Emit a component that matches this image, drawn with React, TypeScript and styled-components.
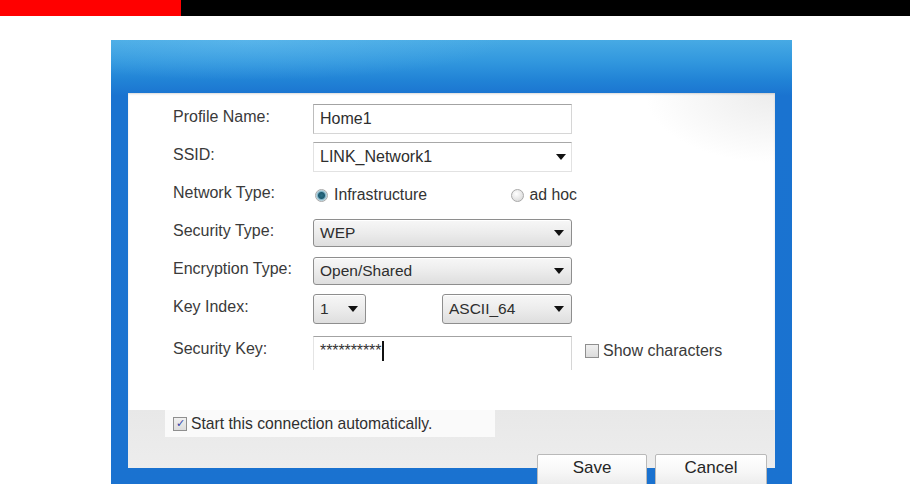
import * as React from 'react';
import styled, { createGlobalStyle, css } from 'styled-components';

const Global = createGlobalStyle`
  html, body {
    margin: 0;
    padding: 0;
    background: #fff;
    overflow: hidden;
  }
  body {
    font-family: "Liberation Sans", Arial, sans-serif;
    width: 913px;
    height: 484px;
  }
`;

const Page = styled.div`
  width: 913px;
  height: 484px;
  overflow: hidden;
`;

const TopBar = styled.div`
  display: flex;
  width: 910px;
  height: 16px;
  background: #000;
`;

const RedSegment = styled.div`
  width: 181px;
  background: #ff0000;
`;

const Dialog = styled.div`
  margin: 24px 0 0 111px;
  width: 681px;
  height: 460px;
  box-sizing: border-box;
  padding: 53px 17px 0 17px;
  background:
    radial-gradient(260px 40px at 20% 0, rgba(120, 200, 245, 0.35), rgba(255, 255, 255, 0)),
    linear-gradient(180deg, #47aae4 0px, #3197de 22px, #2183d6 40px, #1a73d0 56px, #1a72d0 100%);
`;

const Panel = styled.div`
  height: 375px;
  display: flex;
  flex-direction: column;
  background:
    radial-gradient(130px 70px at 100% 0, #ececec, rgba(255, 255, 255, 0)),
    #fff;
  box-shadow: inset 0 1px 2px rgba(0, 0, 0, 0.15);
`;

const Form = styled.div`
  display: grid;
  grid-template-columns: 140px 259px auto;
  grid-template-rows: repeat(6, 30px) 38px;
  row-gap: 8px;
  padding: 11px 0 0 45px;
  color: #3a3a3a;
  font-size: 16px;
`;

const Label = styled.div`
  align-self: center;
  margin-top: -5px;
`;

const fieldText = css`
  box-sizing: border-box;
  display: flex;
  align-items: center;
  padding: 0 6px;
  font-size: 15.5px;
  color: #2e2e2e;
`;

const TextField = styled.div<{ $open?: boolean }>`
  ${fieldText}
  width: 259px;
  font-size: 16px;
  background: #fff;
  border: 1px solid #d6d6d6;
  border-top-color: #a3a3a3;
  border-left-color: #bdbdbd;
  ${(p) => p.$open && css`
    border-bottom: none;
    border-left-color: #e4e4e4;
    height: 34px;
    align-self: end;
    align-items: flex-start;
    padding-top: 5px;
  `}
`;

const Arrow = styled.span`
  margin-left: auto;
  width: 0;
  height: 0;
  border-left: 5px solid transparent;
  border-right: 5px solid transparent;
  border-top: 6px solid #111;
`;

const Select = styled.div<{ $w?: number; $tall?: boolean }>`
  ${fieldText}
  width: ${(p) => (p.$w ? `${p.$w}px` : '100%')};
  height: ${(p) => (p.$tall ? 30 : 28)}px;
  align-self: center;
  border: 1px solid #8e8e8e;
  border-radius: 3px;
  background: linear-gradient(180deg, #f7f7f7 0%, #ececec 50%, #dedede 100%);
  box-shadow: inset 0 1px 0 #fff;
  padding-right: 7px;
`;

const PlainSelect = styled.div`
  ${fieldText}
  font-size: 16px;
  background: #fff;
  border: 1px solid #e2e2e2;
  border-top-color: #a8a8a8;
  padding-right: 5px;
`;

const Split = styled.div`
  display: flex;
  align-items: center;
  justify-content: space-between;
`;

const RadioGroup = styled.div`
  display: flex;
  align-items: center;
  justify-content: space-between;
  width: 264px;
  padding-left: 2px;
  box-sizing: border-box;
  font-size: 15.8px;
  color: #333;
`;

const RadioItem = styled.label`
  display: flex;
  align-items: center;
  gap: 6px;
`;

const Radio = styled.span<{ $on?: boolean }>`
  width: 11px;
  height: 11px;
  border-radius: 50%;
  border: 1px solid #a9a9a9;
  background: ${(p) =>
    p.$on
      ? 'radial-gradient(circle at 50% 50%, #2b6f86 0, #1d5a70 3px, #7fb3c6 4px, #e6eef2 6px)'
      : 'radial-gradient(circle at 40% 35%, #fff, #d2d2d2)'};
`;

const Box = styled.span`
  box-sizing: border-box;
  width: 14px;
  height: 14px;
  border: 1px solid #8f8f8f;
  background: linear-gradient(180deg, #f0f0f0, #dcdcdc);
  display: flex;
  align-items: center;
  justify-content: center;
  color: #3446a8;
  font-size: 11px;
  line-height: 1;
  flex: none;
`;

const CheckLabel = styled.label`
  display: flex;
  align-items: center;
  gap: 4px;
  font-size: 16px;
  color: #3a3a3a;
`;

const ShowChars = styled(CheckLabel)`
  margin-left: 13px;
  align-self: end;
  margin-bottom: 10px;
`;

const Masked = styled.span`
  font-size: 16px;
  letter-spacing: -0.1px;
  color: #333;
`;

const Caret = styled.span`
  display: inline-block;
  width: 2px;
  height: 20px;
  background: #111;
  margin-left: 1px;
  margin-top: -1px;
`;

const Footer = styled.div`
  margin-top: auto;
  height: 58px;
  background: linear-gradient(180deg, #e8e8e8, #ededed);
`;

const AutoRow = styled.div`
  margin-left: 37px;
  width: 330px;
  height: 27px;
  box-sizing: border-box;
  padding-left: 8px;
  display: flex;
  align-items: center;
  background: #fafafa;
`;

const AutoText = styled.span`
  color: #2f2f2f;
  font-size: 15.7px;
`;

const ButtonRow = styled.div`
  display: flex;
  justify-content: flex-end;
  gap: 8px;
  margin-top: -14px;
  padding-right: 8px;
`;

const Button = styled.button<{ $w: number }>`
  width: ${(p) => p.$w}px;
  height: 32px;
  border: 1px solid #b9b9b9;
  border-radius: 2px;
  background: linear-gradient(180deg, #ffffff 0%, #f6f6f6 60%, #ececec 100%);
  font-family: "Liberation Sans", Arial, sans-serif;
  font-size: 17px;
  color: #262626;
  padding: 0 0 4px;
`;

export default function App() {
  return (
    <Page>
      <Global />
      <TopBar>
        <RedSegment />
      </TopBar>
      <Dialog>
        <Panel>
          <Form>
            <Label>Profile Name:</Label>
            <TextField>Home1</TextField>
            <div />

            <Label>SSID:</Label>
            <PlainSelect>
              LINK_Network1
              <Arrow />
            </PlainSelect>
            <div />

            <Label>Network Type:</Label>
            <RadioGroup>
              <RadioItem>
                <Radio $on />
                Infrastructure
              </RadioItem>
              <RadioItem>
                <Radio />
                ad hoc
              </RadioItem>
            </RadioGroup>
            <div />

            <Label>Security Type:</Label>
            <Select>
              WEP
              <Arrow />
            </Select>
            <div />

            <Label>Encryption Type:</Label>
            <Select>
              Open/Shared
              <Arrow />
            </Select>
            <div />

            <Label>Key Index:</Label>
            <Split>
              <Select $w={53} $tall>
                1
                <Arrow />
              </Select>
              <Select $w={130} $tall>
                ASCII_64
                <Arrow />
              </Select>
            </Split>
            <div />

            <Label>Security Key:</Label>
            <TextField $open>
              <Masked>**********</Masked>
              <Caret />
            </TextField>
            <ShowChars>
              <Box />
              Show characters
            </ShowChars>
          </Form>
          <Footer>
            <AutoRow>
              <CheckLabel>
                <Box>✓</Box>
                <AutoText>Start this connection automatically.</AutoText>
              </CheckLabel>
            </AutoRow>
          </Footer>
        </Panel>
        <ButtonRow>
          <Button $w={110}>Save</Button>
          <Button $w={112}>Cancel</Button>
        </ButtonRow>
      </Dialog>
    </Page>
  );
}
